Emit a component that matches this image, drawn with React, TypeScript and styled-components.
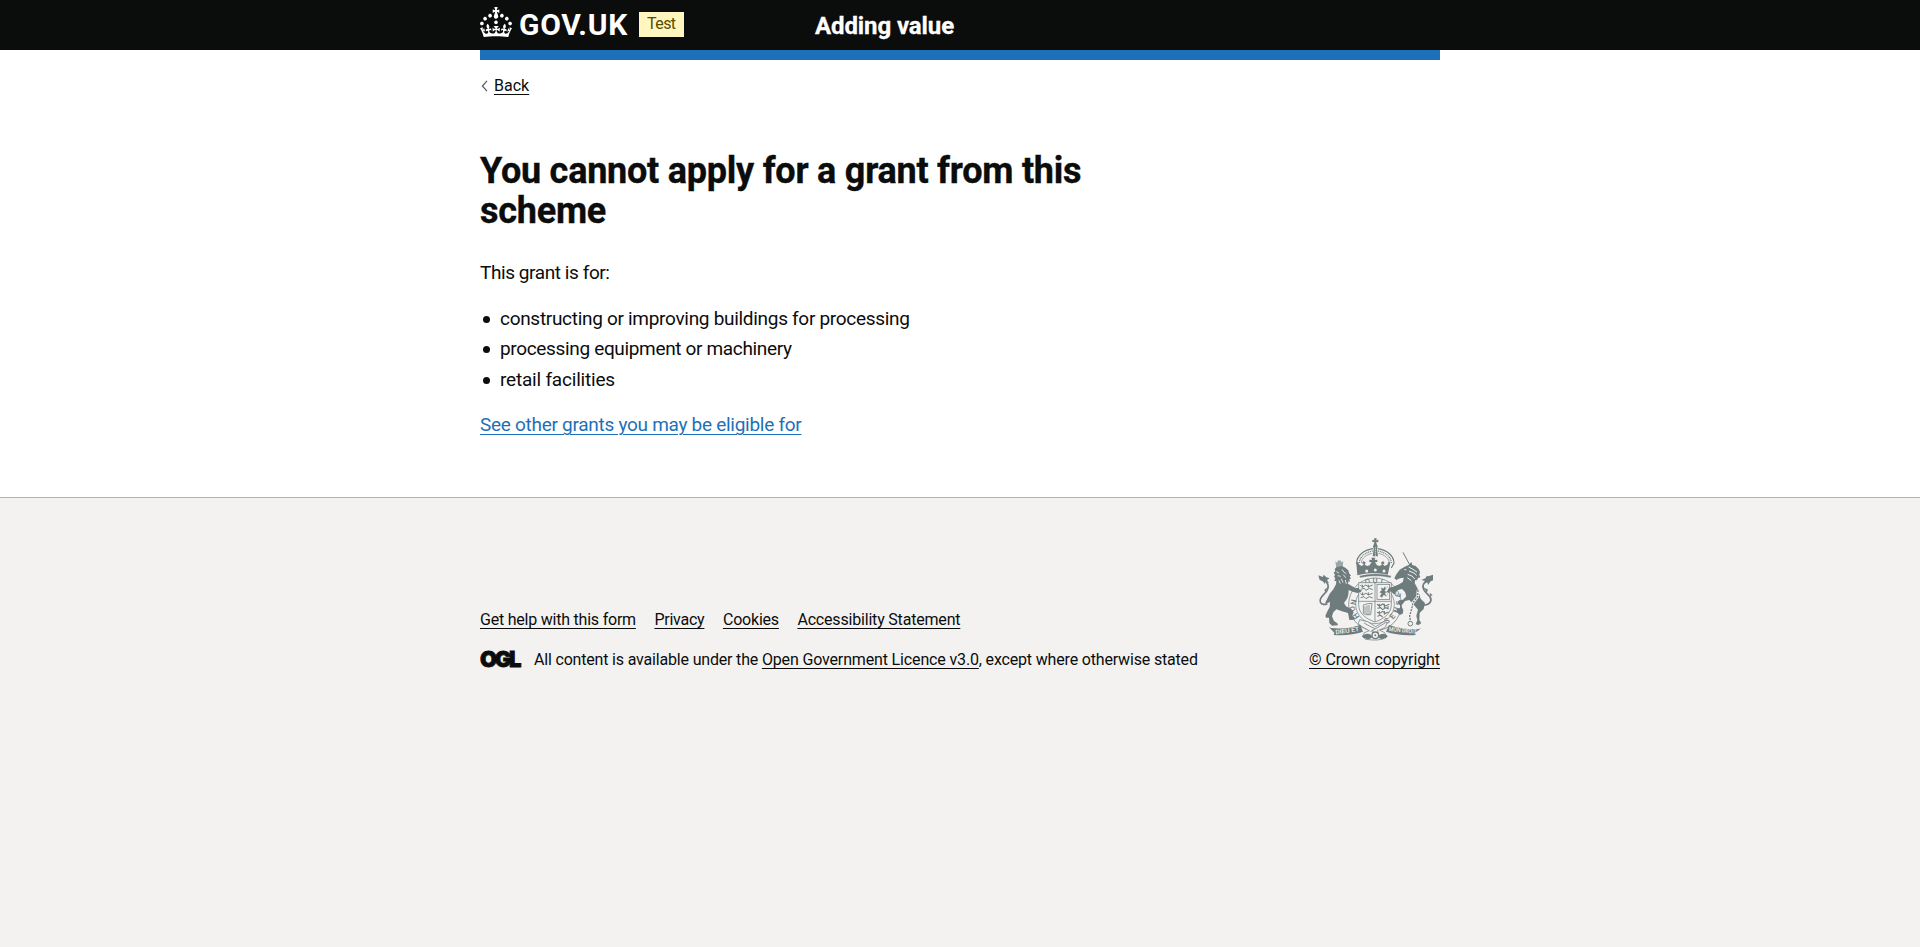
import React from "react";
import styled, { createGlobalStyle } from "styled-components";

const ink = "#0b0c0c";
const blue = "#1d70b8";
const crestGrey = "#6f7c7e";

const GlobalStyle = createGlobalStyle`
  html { background: #f3f2f1; }
  body {
    margin: 0;
    color: ${ink};
    font-family: Roboto, "Liberation Sans", Arial, sans-serif;
    font-size: 19px;
    line-height: 25px;
    background: #fff;
  }
`;

const Container = styled.div`
  width: 960px;
  margin: 0 auto;
`;

const Header = styled.header`
  height: 50px;
  background: ${ink};
  color: #fff;
`;

const HeaderInner = styled(Container)`
  display: flex;
  align-items: flex-start;
  box-sizing: border-box;
  height: 60px;
  border-bottom: 10px solid ${blue};
`;

const Logo = styled.a`
  display: flex;
  flex: none;
  align-items: flex-start;
  width: 159px;
  margin-top: 7px;
  color: #fff;
  text-decoration: none;
`;

const Wordmark = styled.span`
  margin: 0 0 0 7px;
  font-size: 30px;
  font-weight: 700;
  line-height: 36px;
  letter-spacing: 0.7px;
`;

const PhaseTag = styled.strong`
  box-sizing: border-box;
  width: 45px;
  height: 25px;
  margin-top: 12px;
  padding-left: 8px;
  background: #fff7bf;
  color: #594d00;
  font-size: 16px;
  font-weight: 400;
  line-height: 24px;
  letter-spacing: -0.55px;
`;

const ServiceName = styled.a`
  margin: 11px 0 0 131px;
  color: #fff;
  font-size: 24px;
  font-weight: 700;
  line-height: 30px;
  letter-spacing: -0.1px;
  text-decoration: none;
  -webkit-text-stroke: 0.3px #fff;
`;

const BackLink = styled.a`
  display: flex;
  align-items: center;
  height: 20px;
  margin-top: 26px;
  color: ${ink};
  font-size: 16px;
  line-height: 20px;
  text-decoration: underline;
  text-underline-offset: 3px;
  text-decoration-thickness: 1px;
`;

const Chevron = styled.svg`
  width: 14px;
  height: 12px;
`;

const Main = styled.main`
  width: 640px;
  padding: 55px 0 60px;
`;

const Title = styled.h1`
  margin: 0 0 29px;
  font-size: 36px;
  font-weight: 700;
  line-height: 40px;
  letter-spacing: -0.24px;
  -webkit-text-stroke: 0.35px ${ink};
`;

const Paragraph = styled.p<{ $track: number }>`
  margin: 0;
  letter-spacing: ${(p) => p.$track}px;
`;

const Bullets = styled.ul`
  display: flex;
  flex-direction: column;
  gap: 5.3px;
  margin: 21px 0 20.4px;
  padding: 0;
  list-style: none;
`;

const Bullet = styled.li<{ $track: number }>`
  display: flex;
  align-items: center;
  letter-spacing: ${(p) => p.$track}px;
  &::before {
    content: "";
    width: 7px;
    height: 7px;
    margin: 2px 10px 0 3px;
    border-radius: 50%;
    background: ${ink};
  }
`;

const Link = styled.a<{ $color?: string; $track?: number }>`
  color: ${(p) => p.$color ?? ink};
  letter-spacing: ${(p) => p.$track ?? 0}px;
  text-decoration: underline;
  text-decoration-thickness: 1px;
  text-underline-offset: 3px;
`;

const Footer = styled.footer`
  box-sizing: border-box;
  min-height: 450px;
  padding-top: 40px;
  border-top: 1px solid #b1b4b6;
  background: #f3f2f1;
  font-size: 16px;
  line-height: 20px;
`;

const FooterInner = styled(Container)`
  display: flex;
  align-items: flex-end;
  justify-content: space-between;
`;

const FooterLinks = styled.nav`
  display: flex;
  gap: 18.5px;
  margin-bottom: 20px;
`;

const Licence = styled.div`
  display: flex;
  align-items: flex-start;
`;

const OglMark = styled.span`
  width: 54px;
  margin-top: -1px;
  font-family: Inter, sans-serif;
  font-size: 22px;
  font-weight: 900;
  line-height: 20px;
  letter-spacing: -2.3px;
  -webkit-text-stroke: 0.8px ${ink};
`;

const LicenceText = styled.span<{ $track: number }>`
  letter-spacing: ${(p) => p.$track}px;
  white-space: pre;
`;

const Copyright = styled.div`
  display: flex;
  flex-direction: column;
  align-items: flex-end;
`;

const Crest = styled.svg`
  width: 116.67px;
  height: 102.67px;
  margin: 0 6.5px 9.33px 0;
`;

function Crown() {
  return (
    <svg width="32" height="30" viewBox="0 0 32 30" fill="currentColor">
      <path d="M22.6 10.4c-1 .4-2-.1-2.4-1-.4-.9.1-2 1-2.4.9-.4 2 .1 2.4 1s-.1 2-1 2.4m-5.9 6.7c-.9.4-2-.1-2.4-1-.4-.9.1-2 1-2.4.9-.4 2 .1 2.4 1s-.1 2-1 2.4m10.8-3.7c-1 .4-2-.1-2.4-1-.4-.9.1-2 1-2.4.9-.4 2 .1 2.4 1s0 2-1 2.4m3.3 4.8c-1 .4-2-.1-2.4-1-.4-.9.1-2 1-2.4.9-.4 2 .1 2.4 1s-.1 2-1 2.4M17 4.7l2.3 1.2V2.5l-2.3.7-.2-.2.9-3h-3.4l.9 3-.2.2c-.1.1-2.3-.7-2.3-.7v3.4L15 4.7c.1.1.1.2.2.2l-1.3 4c-.1.2-.1.4-.1.6 0 1.1.8 2 1.9 2.2h.7c1-.2 1.9-1.1 1.9-2.1 0-.2 0-.4-.1-.6l-1.3-4c-.1-.2 0-.2.1-.3m-7.6 5.7c.9.4 2-.1 2.4-1 .4-.9-.1-2-1-2.4-.9-.4-2 .1-2.4 1s0 2 1 2.4m-5 3c.9.4 2-.1 2.4-1 .4-.9-.1-2-1-2.4-.9-.4-2 .1-2.4 1s.1 2 1 2.4m-3.2 4.8c.9.4 2-.1 2.4-1 .4-.9-.1-2-1-2.4-.9-.4-2 .1-2.4 1s0 2 1 2.4m14.8 11c4.4 0 8.6.3 12.3.8 1.1-4.5 2.4-7 3.7-8.8l-2.5-.9c.2 1.3.3 1.9 0 2.7-.4-.4-.8-1.1-1.1-2.3l-1.2 4c.7-.5 1.3-.8 2-.9-1.1 2.5-2.6 3.1-3.5 3-1.1-.2-1.7-1.2-1.5-2.1.3-1.2 1.5-1.5 2.1-.1 1.1-2.3-.8-3-2-2.3 1.9-1.9 2.1-3.5.6-5.6-2.1 1.6-2.1 3.2-1.2 5.5-1.2-1.4-3.2-.6-2.5 1.6.9-1.4 2.1-.5 1.9.8-.2 1.1-1.7 2.1-3.5 1.9-2.7-.2-2.9-2.1-2.9-3.6.7-.1 1.9.5 2.9 1.9l.4-4.3c-1.1 1.1-2.1 1.4-3.2 1.4.4-1.2 2.1-3 2.1-3h-5.4s1.7 1.9 2.1 3c-1.1 0-2.1-.2-3.2-1.4l.4 4.3c1-1.4 2.2-2 2.9-1.9-.1 1.5-.2 3.4-2.9 3.6-1.9.2-3.4-.8-3.5-1.9-.2-1.3 1-2.2 1.9-.8.7-2.3-1.2-3-2.5-1.6.9-2.2.9-3.9-1.2-5.5-1.5 2-1.3 3.7.6 5.6-1.2-.7-3.1 0-2 2.3.6-1.4 1.8-1.1 2.1.1.2.9-.3 1.9-1.5 2.1-.9.2-2.4-.5-3.5-3 .6 0 1.2.3 2 .9l-1.2-4c-.3 1.1-.7 1.9-1.1 2.3-.3-.8-.2-1.4 0-2.7l-2.9.9C1.3 23 2.6 25.5 3.7 30c3.7-.5 7.9-.8 12.3-.8" />
    </svg>
  );
}

const paper = "#f3f2f1";

function RoyalArms() {
  return (
    <Crest viewBox="66 38 350 308" fill={crestGrey} stroke={crestGrey} strokeWidth="0">
      {/* garter */}
      <circle cx="240" cy="237" r="79" fill="none" strokeWidth="2.2" />
      <circle cx="240" cy="237" r="58" fill="none" strokeWidth="2" />
      <g fontSize="23" fontWeight="500" fontFamily="Roboto, sans-serif" textAnchor="middle">
        <text x="218" y="177" transform="rotate(-12 218 170)">Q</text>
        <text x="240" y="174">U</text>
        <text x="260" y="177" transform="rotate(12 260 170)">I</text>
        <text x="182" y="281" transform="rotate(55 182 273)">H</text>
        <text x="172" y="259" transform="rotate(75 172 251)">O</text>
        <text x="173" y="236" transform="rotate(100 173 230)">N</text>
        <text x="309" y="217" transform="rotate(-80 309 209)">E</text>
        <text x="309" y="241" transform="rotate(-90 309 233)">S</text>
        <text x="304" y="262" transform="rotate(-70 304 254)">N</text>
        <text x="292" y="281" transform="rotate(-50 292 273)">E</text>
        <text x="276" y="294" transform="rotate(-35 276 286)">S</text>
      </g>

      {/* shield */}
      <path d="M191 172h98v66c0 28-24 43-49 52-25-9-49-24-49-52z" fill={paper} strokeWidth="2.2" />
      <path d="M240 172v118M191 228h98" strokeWidth="2.2" />
      <path
        d="M196 180l8 5 8-6 9 5 12-5M197 192l10-3 6 6 10-6 10 4M196 205l8 4 8-5 9 4 12-4M197 217l10-3 6 6 10-6 10 4M202 178v9M220 178v9M203 201v9M220 201v9"
        fill="none"
        strokeWidth="3"
      />
      <rect x="246" y="177" width="38" height="45" fill="none" strokeWidth="2.2" />
      <path d="M255 213l6-9-7-3 7-6-3-8 7 3 5-6 2 7-4 6 7 3-6 4 6 9-9-5-5 8zM274 190l4-8M275 203l4 6" strokeWidth="1" />
      <path d="M205 239q12-5 26-5l-4 34q-12 2-22-3zM210 243v21M216 240v27M222 239v28" fill="none" strokeWidth="2.4" />
      <path
        d="M246 237l8 5 9-6 8 6 12-5M247 249l10-2 6 6 9-6 9 4M246 261l8 3 9-6 8 6 10-4M247 273l10-3 6 5M253 235v12M268 235v12M253 257v12M268 257v11M279 242v9"
        fill="none"
        strokeWidth="3.2"
      />

      {/* imperial crown */}
      <path d="M237 39h8l-1 6 6-2v8l-6-2 1 7 3 7-2 8 3 22h-16l3-22-2-8 3-7 1-7-6 2v-8l6 2z" />
      <path d="M241 66v30" stroke={paper} strokeWidth="3" strokeDasharray="3 3" />
      <path d="M234 70c-28 4-48 20-49 43l8 15M248 70c28 4 48 20 49 43l-8 15" fill="none" strokeWidth="3.5" />
      <path d="M233 77c-21 4-39 16-40 36M249 77c21 4 39 16 40 36" fill="none" strokeWidth="4" strokeDasharray="3 2.5" />
      <path d="M232 84c-18 4-32 14-33 29M250 84c18 4 32 14 33 29" fill="none" strokeWidth="2" />
      <path d="M184 112l5-3 4 9 8 4 5-5-5-4 5-6 6 5-3 6 8 4 7-2 6-9-7-1v-7l8 1-2-7h12l-2 7 8-1v7l-7 1 6 9 7 2 8-4-3-6 6-5 5 6-5 4 5 5 8-4 4-9 5 3-8 38c-29-8-62-8-91 0z" />
      <g fill={paper}>
        <circle cx="215" cy="137" r="4.5" />
        <circle cx="241" cy="134" r="4.5" />
        <circle cx="267" cy="137" r="4.5" />
      </g>
      <path d="M193 151c31-8 65-8 96 0l-2 7c-29-7-63-7-92 0z" stroke={paper} strokeWidth="1.5" />

      {/* lion */}
      <path d="M121 108l5 4 3-7 4 1 3-2 3 7 6-3-2 17-19 3z" opacity=".65" />
      <path d="M119 131l6-6 16-3 10 5 9 8 2 8 6 8-4 2 4 7-5 1 2 8-5-1-1 7c8 5 15 9 23 14l8-2 3 5 8 4-5 5-9 2-14-4-12-5c0 10-1 20-6 28l-8 11 6 10 16 8 7 9-4 11 8 7-2 5-15 1-1-6-3-15-18-5-17-6-9 9-4 12 6 14 10 7 2 6-18 1-8-8-1-16-9 0-2-5 5-12 8-15 1-16-7 5-8 0 6-12 8-17 11-13 8-15 1-9-6-2 3-8-4-3 3-7-4-6 5-5z" />
      <path d="M124 139l8 4M128 151l9 2M141 132l5 8 8 5M145 148l7 9M139 160l5 12M151 164l3 12M132 165l4 10" stroke={paper} strokeWidth="2.5" />
      <path d="M97 235c-8 4-18 3-21-5-5-14 13-22 20-34 7-13 3-22-4-28" fill="none" strokeWidth="5" />
      <path d="M70 150l13 5 3-7 8 8 10 3-8 5 6 9-12-4 1 8-9-10-8-3z" />
      <path d="M103 181l-8 10-4 11-3-9z" />

      {/* unicorn */}
      <path d="M324 81l21 39" strokeWidth="3" />
      <path d="M314 133l15-9 12-5 8-9 3 9 10 3 9 9 4 9-2 8 3 8-7 2-3 7-5-1-2 9 8 15 6 19 4 13 13 13-4 18-12 12-1 21 6 9-8 6-9-2 5-12-3-14 5-18-12-14-14-15-13 3-11 14 6 14-2 10-9 4-9-10 2-8 8-3 0-9-8-5 5-9 12-2 10-10-4-13-9-9-14 4-9 13-11-10-5 5-7-3 7-13 13-3 19-8 10-7 2-12-11 2-11 5-6-5 6-12z" />
      <path d="M328 133h6M341 125l13 7 12 8M342 137l15 6 8 7M338 147l13 5 8 9M337 157l12 9" stroke={paper} strokeWidth="3" />
      <path d="M369 194l-1 20-14 18-4 19-6 20 2 17" fill="none" stroke={paper} strokeWidth="8" />
      <path d="M369 194l-1 20-14 18-4 19-6 20 2 17" fill="none" strokeWidth="4" strokeDasharray="6 3" />
      <circle cx="346" cy="295" r="7" fill="none" strokeWidth="3" />
      <path d="M379 238c10 3 22 0 27-8 9-14-11-23-18-34-7-12-3-22 4-28" fill="none" strokeWidth="5" />
      <path d="M414 148l-14 5-4-2-5 8-12 5 11 3-3 9 10-5 2 8 8-11 7-3zM383 184l8 10 4 9 4-10zM404 202l9 8-7 3z" />

      {/* base and motto ribbon */}
      <path d="M194 283l24 6 24 15 24-15 10 3-5 14-18 8 16 8 5 10-10 9-17 3h-15l-20-2-9-8 5-12 15-6-22-12-11-9z" fill={paper} strokeWidth="2.2" />
      <path d="M207 293l16 9 17 8M270 293l-23 14-21 12M234 313l-2 17M248 313l2 17" fill="none" strokeWidth="2.4" />
      <path d="M201 333c8-10 26-11 31 1-4 10-24 10-31-1M250 334c5-12 23-11 28-1-6 10-24 11-28 1" />
      <circle cx="241" cy="330" r="10" fill={paper} strokeWidth="4" />
      <circle cx="241" cy="330" r="3" />
      <path d="M101 304l7 4c28 3 56 2 88-9l8 20c-24 8-55 13-88 10l2-7zM379 309l-7 2c-30 1-60-1-90-12l-9 20c24 8 57 13 89 10l-2-7z" />
      <g fill={paper} fontSize="18" fontWeight="500" fontFamily="Roboto, sans-serif">
        <text x="122" y="327" textLength="72" lengthAdjust="spacingAndGlyphs" transform="rotate(-8 122 327)">DIEU ET</text>
        <text x="281" y="317" textLength="84" lengthAdjust="spacingAndGlyphs" transform="rotate(6 281 317)">MON DROIT</text>
      </g>
    </Crest>
  );
}

export default function App() {
  return (
    <>
      <GlobalStyle />
      <Header>
        <HeaderInner>
          <Logo href="#">
            <Crown />
            <Wordmark>GOV.UK</Wordmark>
          </Logo>
          <PhaseTag>Test</PhaseTag>
          <ServiceName href="#">Adding value</ServiceName>
        </HeaderInner>
      </Header>
      <Container>
        <BackLink href="#">
          <Chevron viewBox="0 0 14 12" fill="none" stroke="#505a5f" strokeWidth="1.2">
            <path d="M7 .9L2.4 6 7 11.1" />
          </Chevron>
          Back
        </BackLink>
        <Main>
          <Title>You cannot apply for a grant from this scheme</Title>
          <Paragraph $track={-0.42}>This grant is for:</Paragraph>
          <Bullets>
            <Bullet $track={-0.3}>constructing or improving buildings for processing</Bullet>
            <Bullet $track={-0.34}>processing equipment or machinery</Bullet>
            <Bullet $track={-0.2}>retail facilities</Bullet>
          </Bullets>
          <Paragraph $track={0}>
            <Link href="#" $color={blue} $track={-0.28}>See other grants you may be eligible for</Link>
          </Paragraph>
        </Main>
      </Container>
      <Footer>
        <FooterInner>
          <div>
            <FooterLinks>
              <Link href="#" $track={-0.22}>Get help with this form</Link>
              <Link href="#" $track={-0.24}>Privacy</Link>
              <Link href="#" $track={-0.2}>Cookies</Link>
              <Link href="#" $track={-0.19}>Accessibility Statement</Link>
            </FooterLinks>
            <Licence>
              <OglMark>OGL</OglMark>
              <LicenceText $track={-0.18}>All content is available under the </LicenceText>
              <Link href="#" $track={-0.15}>Open Government Licence v3.0</Link>
              <LicenceText $track={-0.17}>, except where otherwise stated</LicenceText>
            </Licence>
          </div>
          <Copyright>
            <RoyalArms />
            <Link href="#" $track={-0.09}>© Crown copyright</Link>
          </Copyright>
        </FooterInner>
      </Footer>
    </>
  );
}
